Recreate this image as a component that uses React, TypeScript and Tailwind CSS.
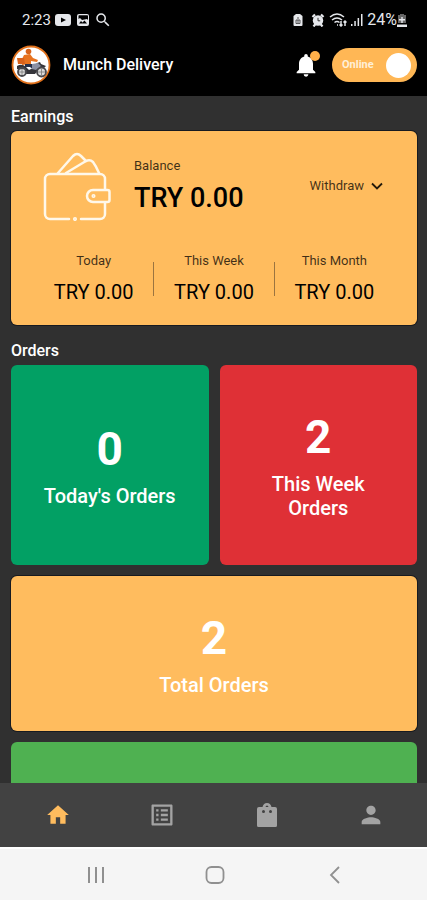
import React, { useState } from 'react';
import clsx from 'clsx';
import { MdHome, MdListAlt, MdNotifications, MdPerson, MdSearch } from 'react-icons/md';

interface Period {
  label: string;
  amount: string;
}

interface OrderCardProps {
  count: number;
  label: string;
  className: string;
}

const periods: Period[] = [
  { label: 'Today', amount: 'TRY 0.00' },
  { label: 'This Week', amount: 'TRY 0.00' },
  { label: 'This Month', amount: 'TRY 0.00' }
];

const RiderLogo: React.FC = () => (
  <svg viewBox="0 0 40 40" className="size-10 shrink-0" aria-hidden="true">
    <circle cx="20" cy="20" r="18.500" fill="#fff" stroke="#e0711c" strokeWidth="1.800" />
    <circle cx="17.500" cy="6.500" r="2.800" fill="#d9641b" />
    <path d="M13 10l6-1 3 4 5 2-1 2-6-1v3l-9 1v-6z" fill="#e8731f" />
    <path d="M6 13h7l1 6H7z" fill="#d8621c" />
    <path d="M14 19h7l5 6h-3l-4-3h-5z" fill="#26304a" />
    <path d="M6 21q5-3 9 1l3 3 4-2 4-5 3-1 1 2 5 2-2 2-5 1-4 5H15l-4-4-5-1z" fill="#34343a" />
    <path d="M21 19l6-1 3 3-5 4-4-1z" fill="#8b90a3" />
    <g fill="#dcdcdc" stroke="#4a4a4e" strokeWidth="1.800">
      <circle cx="11" cy="27" r="4" />
      <circle cx="30.500" cy="27" r="4.500" />
    </g>
    <path d="M8 27h6M11 24v6M27 27h7M30.500 24v6" stroke="#777" strokeWidth=".8" />
  </svg>
);

const WalletIcon: React.FC = () => (
  <svg
    viewBox="0 0 70 70"
    className="h-[70px] w-[70px] shrink-0"
    fill="none"
    stroke="#fff8ea"
    strokeWidth="2.500"
    strokeLinecap="round"
    strokeLinejoin="round"
    aria-hidden="true"
  >
    <path d="M27 68H8a5 5 0 0 1-5-5V28a5 5 0 0 1 5-5h50a5 5 0 0 1 5 5v10M63 52v11a5 5 0 0 1-5 5H39" />
    <path d="M16 22L31 5q4-4 8 0l5 5" />
    <path d="M24 22L44 10q4-2 7 1 3 4 6 11" />
    <path d="M51 39h14.500q2 0 2 2v8q0 2-2 2H51a6 6 0 0 1 0-12z" />
    <circle cx="51.500" cy="45" r=".8" />
    <circle cx="33" cy="68" r=".8" />
  </svg>
);

const BagIcon: React.FC = () => (
  <svg viewBox="0 0 24 28" className="h-7 w-6" fill="currentColor" aria-hidden="true">
    <path
      fillRule="evenodd"
      d="M7.500 6Q8.500 2 12 2t4.500 4H20q2 0 2 2v16.500q0 1.500-1.500 1.500h-17Q2 26 2 24.500V8q0-2 2-2zM10.500 6h3q-.3-1.500-1.500-1.500T10.500 6zM8.500 9a1.500 1.500 0 1 0 0 3 1.500 1.500 0 0 0 0-3zM15.500 9a1.500 1.500 0 1 0 0 3 1.500 1.500 0 0 0 0-3z"
    />
  </svg>
);

const StatusBar: React.FC = () => (
  <div className="flex h-10 items-center justify-between pr-5 pl-[22px] text-[15px] leading-5 text-gray-200">
    <div className="flex items-center gap-1">
      <span>2:23</span>
      <svg viewBox="0 0 16 12" className="h-3 w-4">
        <rect width="16" height="12" rx="3" fill="currentColor" />
        <path d="M6 3.500l5 2.500-5 2.500z" fill="#000" />
      </svg>
      <svg viewBox="0 0 14 14" className="ml-px size-[14px]">
        <path
          fillRule="evenodd"
          d="M3 1h8a2 2 0 0 1 2 2v8a2 2 0 0 1-2 2H3a2 2 0 0 1-2-2V3a2 2 0 0 1 2-2zM2.500 3v3L4 5l2 2 5-1 1 1V3q0-.7-.7-.7H3.200q-.7 0-.7.7zM3 10.500h8L8.500 7.500 6.500 9.500 5 8z"
          fill="currentColor"
        />
      </svg>
      <MdSearch className="size-[18px]" stroke="currentColor" />
    </div>
    <div className="flex items-center gap-1">
      <svg viewBox="0 0 10 12" className="h-3 w-[10px]">
        <path d="M3 0h4l2.500 2v9q0 1-1 1h-7q-1 0-1-1V2z" fill="currentColor" />
        <path d="M5 3v2M3 6h4v3.500H3zM5 6v3" fill="none" stroke="#333" strokeWidth=".8" />
      </svg>
      <svg viewBox="0 0 14 14" className="ml-1 size-[14px]">
        <circle cx="7" cy="7.500" r="5.200" fill="currentColor" />
        <path d="M1.500 4L4 1.500M12.500 4L10 1.500M2.500 13.500l2-2.500M11.500 13.500l-2-2.500" stroke="currentColor" strokeWidth="2.200" />
        <path d="M7 4.800v3h2.200" fill="none" stroke="#333" />
      </svg>
      <svg viewBox="0 0 18 14" className="h-[14px] w-[18px]" fill="none" stroke="currentColor" strokeWidth="1.500">
        <path d="M1 4q7-6 14 0M3 7q5-4 10 0M5.500 9.500q2.500-2 5 0" />
        <path d="M8 12h1M12 13V8M10.500 11.500L12 13l1.500-1.500M16 8v5M14.500 9.500L16 8l1.500 1.500" />
      </svg>
      <svg viewBox="0 0 12 12" className="h-3 w-3" fill="currentColor">
        <path d="M0 10h1.500v2H0zM3.300 7h1.500v5H3.300zM6.600 4h1.500v8H6.600zM10 0h1.500v12H10z" />
      </svg>
      <div className="flex items-center">
        <span className="text-base leading-5">24%</span>
        <svg viewBox="0 0 10 13" className="h-[13px] w-[10px]">
          <path d="M3 0h4v1h2v8H1V1h2z" fill="#666" />
          <path d="M0 10.500h10V13H0zM4.300 3h1.400v2H8v1.400H5.700V9H4.300V6.400H2V5h2.300z" fill="currentColor" />
        </svg>
      </div>
    </div>
  </div>
);

const Header: React.FC = () => {
  const [online, setOnline] = useState(true);

  return (
    <header className="flex h-14 items-start pr-[10px] pl-[11px]">
      <div className="flex h-[50px] flex-1 items-center gap-3">
        <RiderLogo />
        <h1 className="flex-1 text-base font-medium text-white">Munch Delivery</h1>
        <button type="button" aria-label="Notifications" className="relative text-white">
          <MdNotifications className="size-7" />
          <span className="absolute top-0 right-0 size-[10px] rounded-full bg-[#ffb04a]" />
        </button>
        <label
          className={clsx(
            'flex h-[34px] w-[85px] cursor-pointer items-center justify-between rounded-full pr-[6px] pl-[10px]',
            online ? 'bg-[#ffb755]' : 'flex-row-reverse bg-gray-500'
          )}
        >
          <input
            type="checkbox"
            role="switch"
            className="sr-only"
            checked={online}
            onChange={e => setOnline(e.target.checked)}
          />
          <span className="text-[11px] font-bold text-[#fff0d8]">{online ? 'Online' : 'Offline'}</span>
          <span className="size-[25px] rounded-full bg-white" />
        </label>
      </div>
    </header>
  );
};

const EarningsCard: React.FC = () => (
  <div className="flex h-[194px] shrink-0 flex-col rounded-md bg-[#ffbc5e] pt-5 text-black ring-1 ring-[#171a20]">
    <div className="flex items-center px-[31px]">
      <WalletIcon />
      <div className="ml-[22px] flex-1">
        <p className="text-[13px] leading-4 text-black/75">Balance</p>
        <p className="mt-2 text-[27px] leading-8 font-medium">TRY 0.00</p>
      </div>
      <button type="button" className="flex items-center gap-1 text-[13px] leading-4 text-black/75">
        Withdraw
        <svg viewBox="0 0 18 18" className="size-[18px]" fill="none" stroke="#241a0b" strokeWidth="1.800">
          <path d="M4 6.500l5 5 5-5" />
        </svg>
      </button>
    </div>
    <div className="mt-8 flex items-center px-[23px] text-center">
      {periods.map((period, index) => (
        <React.Fragment key={period.label}>
          {index > 0 && <div className="h-[34px] w-px bg-[#9b7440]" />}
          <div className="flex-1">
            <p className="text-[13px] leading-4 text-black/75">{period.label}</p>
            <p className="mt-[11px] text-xl leading-6">{period.amount}</p>
          </div>
        </React.Fragment>
      ))}
    </div>
  </div>
);

const OrderCard: React.FC<OrderCardProps> = ({ count, label, className }) => (
  <div
    className={clsx(
      'flex flex-col items-center justify-center gap-2 rounded-md px-7 text-center text-white',
      className
    )}
  >
    <p className="text-[46px] leading-[54px] font-bold">{count}</p>
    <p className="text-xl leading-6 font-medium">{label}</p>
  </div>
);

const navItems = [
  { label: 'Home', icon: <MdHome className="size-[26px]" /> },
  { label: 'Orders', icon: <MdListAlt className="size-7" /> },
  { label: 'Shop', icon: <BagIcon /> },
  { label: 'Profile', icon: <MdPerson className="size-7" /> }
];

const BottomNav: React.FC = () => {
  const [active, setActive] = useState('Home');

  return (
    <nav className="flex h-16 shrink-0 items-center bg-[#424242] pr-1 pl-[6px]">
      {navItems.map(item => (
        <button
          key={item.label}
          type="button"
          aria-label={item.label}
          onClick={() => setActive(item.label)}
          className={clsx(
            'flex flex-1 justify-center',
            active === item.label ? 'text-[#ffbc5e]' : 'text-[#a3a3a3]'
          )}
        >
          {item.icon}
        </button>
      ))}
    </nav>
  );
};

const SystemNav: React.FC = () => (
  <div className="flex h-[53px] shrink-0 items-center justify-around border-t-2 border-white bg-[#f5f5f5] pr-8 pl-9 text-[#909090]">
    <button type="button" aria-label="Recent apps">
      <svg viewBox="0 0 20 20" className="size-5" stroke="currentColor" strokeWidth="2">
        <path d="M3 2v16M10 2v16M17 2v16" />
      </svg>
    </button>
    <button type="button" aria-label="Home screen">
      <svg viewBox="0 0 20 20" className="size-5" fill="none" stroke="currentColor" strokeWidth="1.800">
        <rect x="1.500" y="2" width="17" height="16" rx="5" />
      </svg>
    </button>
    <button type="button" aria-label="Back">
      <svg viewBox="0 0 20 20" className="size-5" fill="none" stroke="currentColor" strokeWidth="1.800">
        <path d="M14 2L6 10l8 8" />
      </svg>
    </button>
  </div>
);

const App: React.FC = () => {
  return (
    <div className="flex h-screen flex-col bg-[#303030] font-[Roboto,sans-serif]">
      <div className="shrink-0 bg-black">
        <StatusBar />
        <Header />
      </div>

      <main className="flex min-h-0 flex-1 flex-col overflow-hidden pt-[11px] pr-[10px] pl-[11px]">
        <h2 className="mb-1 text-base leading-5 font-medium text-white">Earnings</h2>
        <EarningsCard />

        <h2 className="mt-4 mb-1 text-base leading-5 font-medium text-white">Orders</h2>
        <div className="grid shrink-0 grid-cols-2 gap-[11px]">
          <OrderCard count={0} label="Today's Orders" className="h-[200px] bg-[#02a064]" />
          <OrderCard count={2} label="This Week Orders" className="h-[200px] bg-[#df3036]" />
          <OrderCard count={2} label="Total Orders" className="col-span-2 h-[155px] bg-[#ffbc5e] ring-1 ring-[#171a20]" />
          <div className="col-span-2 h-[155px] rounded-md bg-[#4fb151]" />
        </div>
      </main>

      <BottomNav />
      <SystemNav />
    </div>
  );
};

export default App;
